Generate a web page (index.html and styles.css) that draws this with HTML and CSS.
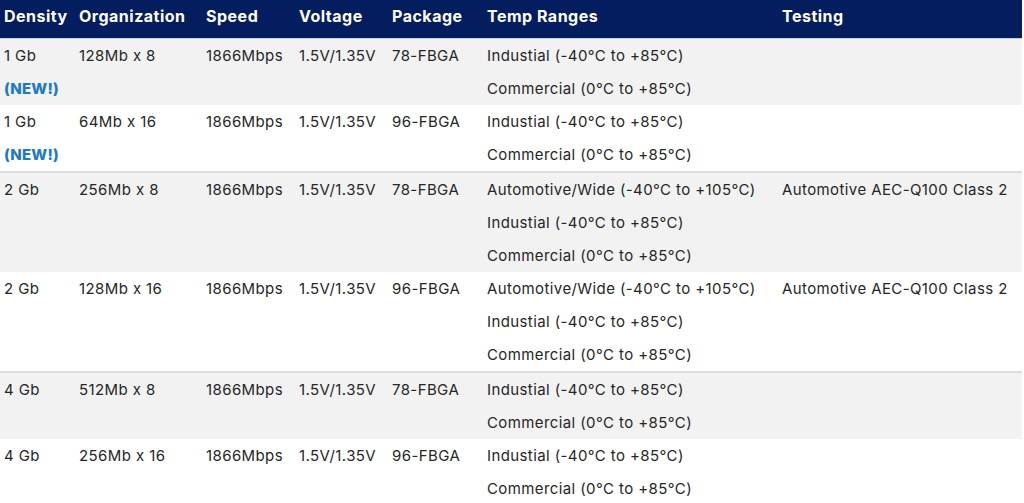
FILE: index.html
```html
<!DOCTYPE html>
<html lang="en">
<head>
<meta charset="utf-8">
<title>DDR3 SDRAM</title>
<link rel="stylesheet" href="styles.css">
</head>
<body>
<table class="spec">
  <colgroup>
    <col class="c-density"><col class="c-org"><col class="c-speed"><col class="c-volt"><col class="c-pkg"><col class="c-temp"><col class="c-test">
  </colgroup>
  <thead>
    <tr>
      <th>Density</th><th>Organization</th><th>Speed</th><th>Voltage</th><th>Package</th><th>Temp Ranges</th><th>Testing</th>
    </tr>
  </thead>
  <tbody>
    <tr class="odd">
      <td>1 Gb<br><span class="new">(NEW!)</span></td>
      <td>128Mb x 8</td><td>1866Mbps</td><td>1.5V/1.35V</td><td>78-FBGA</td>
      <td>Industial (-40°C to +85°C)<br>Commercial (0°C to +85°C)</td>
      <td></td>
    </tr>
    <tr class="even">
      <td>1 Gb<br><span class="new">(NEW!)</span></td>
      <td>64Mb x 16</td><td>1866Mbps</td><td>1.5V/1.35V</td><td>96-FBGA</td>
      <td>Industial (-40°C to +85°C)<br>Commercial (0°C to +85°C)</td>
      <td></td>
    </tr>
    <tr class="odd">
      <td>2 Gb</td>
      <td>256Mb x 8</td><td>1866Mbps</td><td>1.5V/1.35V</td><td>78-FBGA</td>
      <td>Automotive/Wide (-40°C to +105°C)<br>Industial (-40°C to +85°C)<br>Commercial (0°C to +85°C)</td>
      <td>Automotive AEC-Q100 Class 2</td>
    </tr>
    <tr class="even">
      <td>2 Gb</td>
      <td>128Mb x 16</td><td>1866Mbps</td><td>1.5V/1.35V</td><td>96-FBGA</td>
      <td>Automotive/Wide (-40°C to +105°C)<br>Industial (-40°C to +85°C)<br>Commercial (0°C to +85°C)</td>
      <td>Automotive AEC-Q100 Class 2</td>
    </tr>
    <tr class="odd">
      <td>4 Gb</td>
      <td>512Mb x 8</td><td>1866Mbps</td><td>1.5V/1.35V</td><td>78-FBGA</td>
      <td>Industial (-40°C to +85°C)<br>Commercial (0°C to +85°C)</td>
      <td></td>
    </tr>
    <tr class="even">
      <td>4 Gb</td>
      <td>256Mb x 16</td><td>1866Mbps</td><td>1.5V/1.35V</td><td>96-FBGA</td>
      <td>Industial (-40°C to +85°C)<br>Commercial (0°C to +85°C)</td>
      <td></td>
    </tr>
  </tbody>
</table>
</body>
</html>
```
FILE: styles.css
```css
html, body {
  margin: 0;
  padding: 0;
  background: #ffffff;
}
body {
  font-family: "Inter", "Liberation Sans", sans-serif;
  color: #262626;
  font-size: 15px;
  letter-spacing: 0.4px;
}
.spec {
  width: 1022px;
  border-collapse: collapse;
  table-layout: fixed;
}
.c-density { width: 75px; }
.c-org { width: 127px; }
.c-speed { width: 93px; }
.c-volt { width: 93px; }
.c-pkg { width: 95px; }
.c-temp { width: 295px; }
.c-test { width: 244px; }
.spec th {
  background: #041d5f;
  color: #ffffff;
  font-weight: 700;
  font-size: 16px;
  letter-spacing: 0.5px;
  text-align: left;
  height: 38px;
  padding: 0 4px 5px;
  box-sizing: border-box;
  border-bottom: 1px solid #c9cedb;
  white-space: nowrap;
}
.spec td {
  vertical-align: top;
  text-align: left;
  line-height: 33px;
  padding: 0 4px;
  white-space: nowrap;
  overflow: hidden;
}
.spec tr.odd td { background: #f2f2f2; }
.spec tr.even td {
  background: #ffffff;
  border-bottom: 2px solid #dcdcdc;
}
.new {
  color: #1f78c8;
  font-weight: 800;
  letter-spacing: 0.2px;
}
```
